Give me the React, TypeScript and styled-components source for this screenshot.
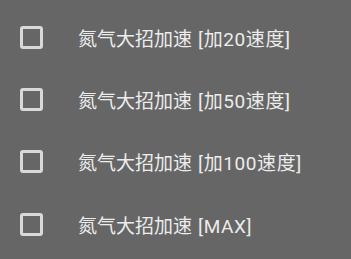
import styled, { createGlobalStyle } from 'styled-components';

const GlobalStyle = createGlobalStyle`
  html, body {
    margin: 0;
    padding: 0;
    background: #666666;
  }
`;

const List = styled.div`
  display: flex;
  flex-direction: column;
  width: 351px;
  height: 259px;
  padding-top: 6px;
  box-sizing: border-box;
  background: #666666;
  font-family: Roboto, 'Noto Sans CJK SC', sans-serif;
`;

const Row = styled.label`
  display: flex;
  align-items: center;
  height: 62.3px;
  padding-left: 20px;
  cursor: pointer;
`;

const Box = styled.span`
  width: 23px;
  height: 23px;
  box-sizing: border-box;
  border: 3px solid #d9d9d9;
  border-radius: 3px;
  flex-shrink: 0;
`;

const Label = styled.span`
  margin-left: 35px;
  font-size: 19px;
  color: #ececec;
  white-space: nowrap;
`;

const Suffix = styled.span`
  margin-left: 6px;
  letter-spacing: 0.6px;
`;

const items = ['[加20速度]', '[加50速度]', '[加100速度]', '[MAX]'];

export default function App() {
  return (
    <>
      <GlobalStyle />
      <List>
        {items.map((s) => (
          <Row key={s}>
            <Box />
            <Label>
              氮气大招加速<Suffix>{s}</Suffix>
            </Label>
          </Row>
        ))}
      </List>
    </>
  );
}
